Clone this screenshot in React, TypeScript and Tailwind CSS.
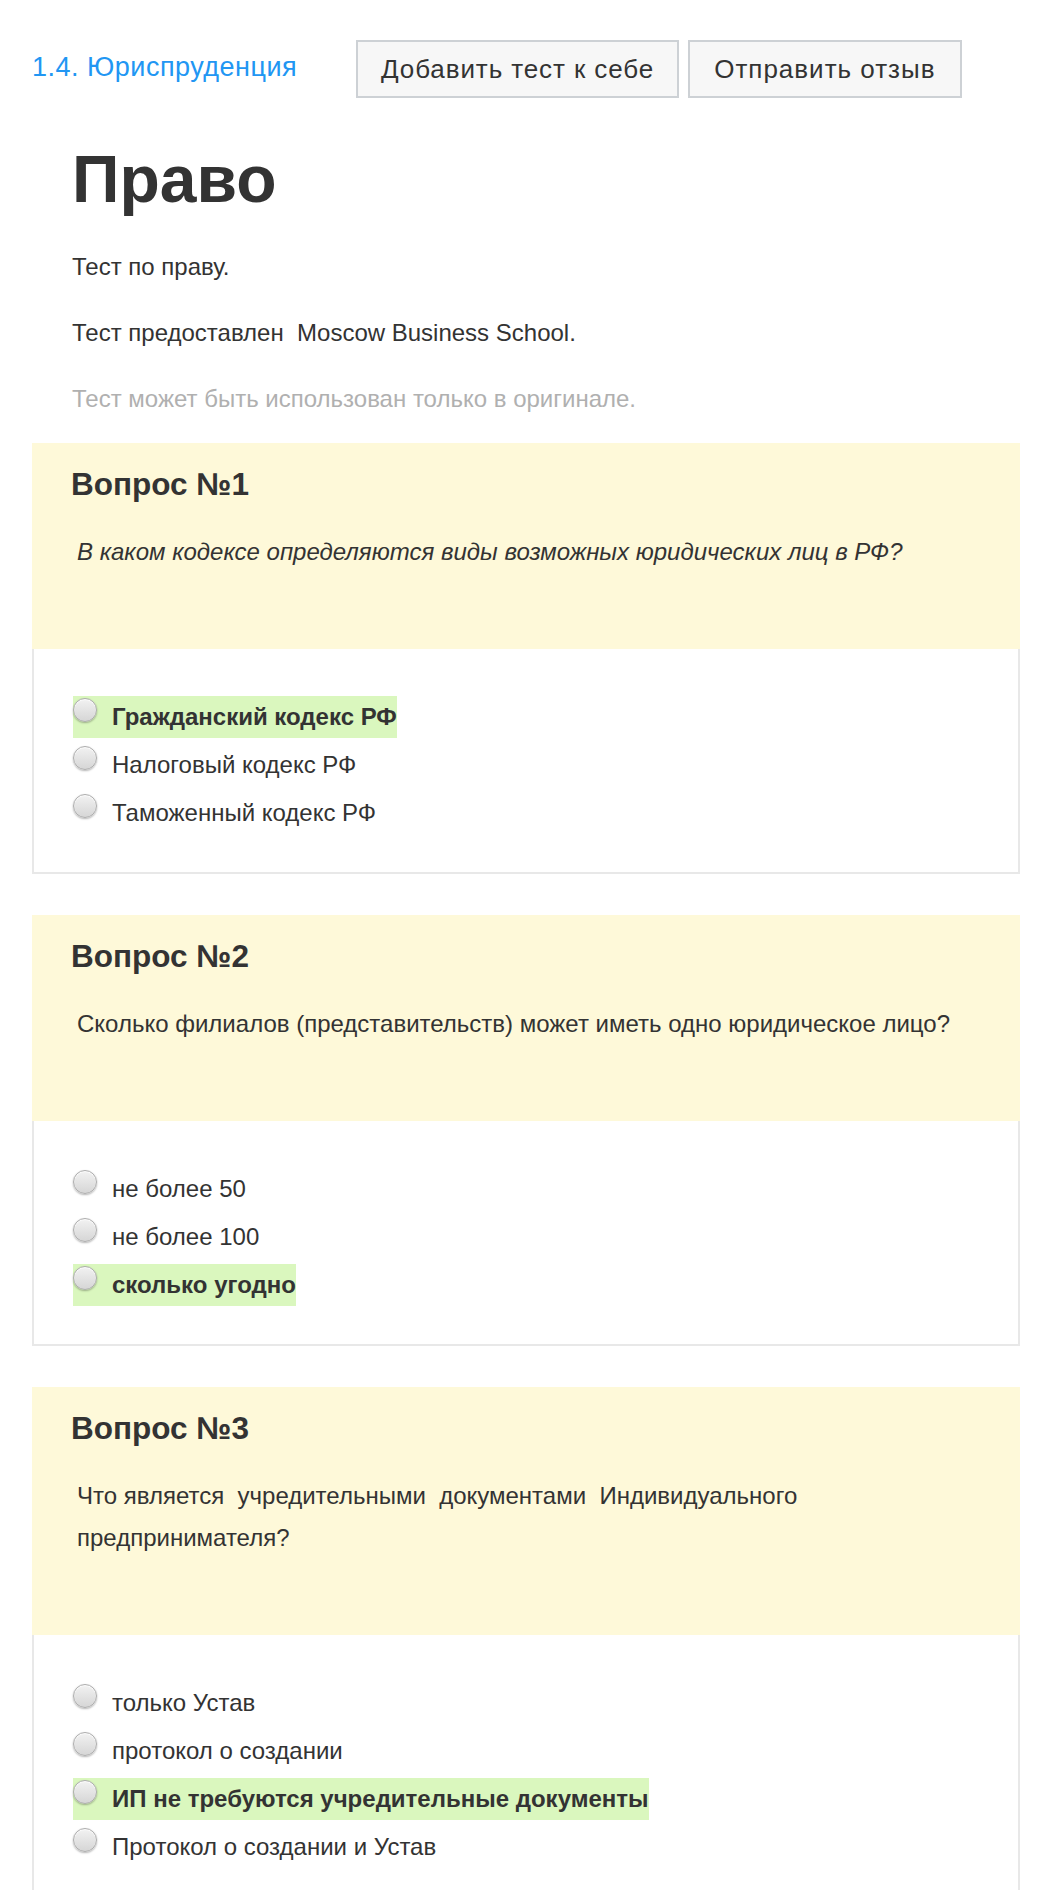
import React from "react";

type Answer = { text: string; correct?: boolean };
type Question = { n: number; text: React.ReactNode; italic?: boolean; answers: Answer[] };

const questions: Question[] = [
  {
    n: 1,
    italic: true,
    text: "В каком кодексе определяются виды возможных юридических лиц в РФ?",
    answers: [
      { text: "Гражданский кодекс РФ", correct: true },
      { text: "Налоговый кодекс РФ" },
      { text: "Таможенный кодекс РФ" },
    ],
  },
  {
    n: 2,
    text: "Сколько филиалов (представительств) может иметь одно юридическое лицо?",
    answers: [
      { text: "не более 50" },
      { text: "не более 100" },
      { text: "сколько угодно", correct: true },
    ],
  },
  {
    n: 3,
    text: "Что является\u00a0 учредительными\u00a0 документами\u00a0 Индивидуального предпринимателя?",
    answers: [
      { text: "только Устав" },
      { text: "протокол о создании" },
      { text: "ИП не требуются учредительные документы", correct: true },
      { text: "Протокол о создании и Устав" },
    ],
  },
];

function Radio() {
  return (
    <span className="mt-[2px] inline-block h-[24px] w-[24px] shrink-0 rounded-full border border-[#adadad] bg-linear-to-b from-[#f2f2f2] to-[#d6d6d6] shadow-[inset_0_1px_1px_rgba(255,255,255,0.9),0_1px_2px_rgba(0,0,0,0.3)]" />
  );
}

function QuestionCard({ q }: { q: Question }) {
  return (
    <div className="w-[988px] mb-[41px]">
      <div className="bg-[#fef9d9] px-[39px] pt-[23px] pb-[76px]">
        <div className="text-[31.5px] leading-[36px] font-bold text-[#333333]">Вопрос №{q.n}</div>
        <div
          className={
            "mt-[29px] pl-[6px] text-[24px] leading-[42px] text-[#333333] " + (q.italic ? "italic" : "")
          }
        >
          {q.text}
        </div>
      </div>
      <div className="border-2 border-t-0 border-[#e8e8e8] pl-[39px] pr-[39px] pt-[47px] pb-[38px]">
        {q.answers.map((a, i) => (
          <div key={i} className={"h-[42px] " + (i < q.answers.length - 1 ? "mb-[6px]" : "")}>
            <label
              className={
                "inline-flex h-[42px] items-start " + (a.correct ? "bg-[#daf7be] font-bold" : "")
              }
            >
              <Radio />
              <span className="ml-[15px] text-[24px] leading-[42px] text-[#333333]">{a.text}</span>
            </label>
          </div>
        ))}
      </div>
    </div>
  );
}

export default function App() {
  return (
    <div
      className="min-h-[1890px] bg-white pl-[32px] pr-[30px] pt-[40px] text-[#333333]"
      style={{ fontFamily: '"Liberation Sans", Arial, Helvetica, sans-serif' }}
    >
      <div className="flex h-[58px] items-center">
        <div className="w-[324px] mb-[4px]">
          <a className="text-[27px] leading-[30px] tracking-[0.5px] text-[#2196f3]" href="#">
            1.4. Юриспруденция
          </a>
        </div>
        <button className="h-[58px] border-2 border-[#cdd1d5] bg-[#f7f7f7] px-[23px] text-[26px] tracking-[0.9px] text-[#333333]">
          Добавить тест к себе
        </button>
        <button className="ml-[9px] h-[58px] border-2 border-[#cdd1d5] bg-[#f7f7f7] px-[24px] text-[26px] tracking-[1px] text-[#333333]">
          Отправить отзыв
        </button>
      </div>
      <div className="pl-[40px]">
        <h1 className="mt-[43px] text-[66px] leading-[76px] font-bold text-[#333333]">Право</h1>
        <p className="mt-[32px] text-[24px] leading-[36px]">Тест по праву.</p>
        <p className="mt-[30px] text-[24px] leading-[36px]">Тест предоставлен&nbsp; Moscow Business School.</p>
        <p className="mt-[30px] text-[24px] leading-[36px] text-[#b0b0b0]">
          Тест может быть использован только в оригинале.
        </p>
      </div>
      <div className="mt-[26px]">
        {questions.map((q) => (
          <QuestionCard key={q.n} q={q} />
        ))}
      </div>
    </div>
  );
}
